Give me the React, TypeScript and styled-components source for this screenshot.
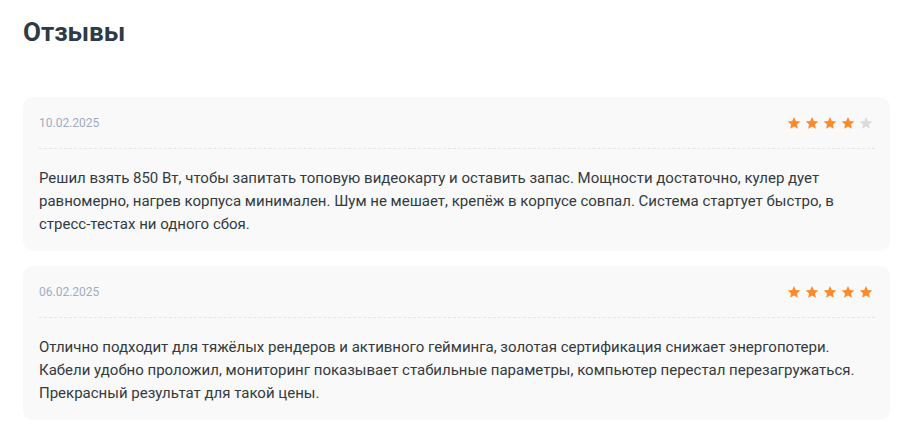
import React from "react";
import styled, { createGlobalStyle } from "styled-components";

const Global = createGlobalStyle`
  html, body { margin: 0; padding: 0; background: #ffffff; }
  body { font-family: Roboto, "Noto Sans", Arial, sans-serif; }
  * { box-sizing: border-box; }
`;

const Page = styled.div`
  padding: 17px 16px 0 23px;
  width: 906px;
`;

const Title = styled.h2`
  margin: 0 0 50px 0;
  font-size: 26px;
  line-height: 30px;
  font-weight: 700;
  color: #2e3b47;
`;

const List = styled.div`
  display: flex;
  flex-direction: column;
  gap: 15px;
  width: 867px;
`;

const Card = styled.div`
  background: #f9f9f9;
  border-radius: 10px;
  padding: 16px 17px 15px 16px;
`;

const Header = styled.div`
  display: flex;
  align-items: center;
  justify-content: space-between;
  height: 20px;
`;

const DateText = styled.span`
  font-size: 12px;
  color: #9eadc2;
`;

const Stars = styled.div`
  display: flex;
  gap: 4px;
`;

const Divider = styled.div`
  margin: 15px -2px 18px 0;
  border-top: 1px dashed #e6e6e6;
`;

const Body = styled.p`
  margin: 0;
  font-size: 15px;
  line-height: 23px;
  color: #333a40;
`;

const Star = ({ filled }: { filled: boolean }) => (
  <svg width="14" height="14" viewBox="0 0 24 24">
    <path
      d="M12 1.5l3.1 7.1 7.7.7-5.8 5.1 1.7 7.6L12 18l-6.7 4 1.7-7.6-5.8-5.1 7.7-.7z"
      fill={filled ? "#ff8a2a" : "#dcdcdc"}
    />
  </svg>
);

const reviews = [
  {
    date: "10.02.2025",
    rating: 4,
    text: "Решил взять 850 Вт, чтобы запитать топовую видеокарту и оставить запас. Мощности достаточно, кулер дует равномерно, нагрев корпуса минимален. Шум не мешает, крепёж в корпусе совпал. Система стартует быстро, в стресс-тестах ни одного сбоя.",
  },
  {
    date: "06.02.2025",
    rating: 5,
    text: "Отлично подходит для тяжёлых рендеров и активного гейминга, золотая сертификация снижает энергопотери. Кабели удобно проложил, мониторинг показывает стабильные параметры, компьютер перестал перезагружаться. Прекрасный результат для такой цены.",
  },
];

export default function App() {
  return (
    <>
      <Global />
      <Page>
        <Title>Отзывы</Title>
        <List>
          {reviews.map((r) => (
            <Card key={r.date}>
              <Header>
                <DateText>{r.date}</DateText>
                <Stars>
                  {[0, 1, 2, 3, 4].map((i) => (
                    <Star key={i} filled={i < r.rating} />
                  ))}
                </Stars>
              </Header>
              <Divider />
              <Body>{r.text}</Body>
            </Card>
          ))}
        </List>
      </Page>
    </>
  );
}
